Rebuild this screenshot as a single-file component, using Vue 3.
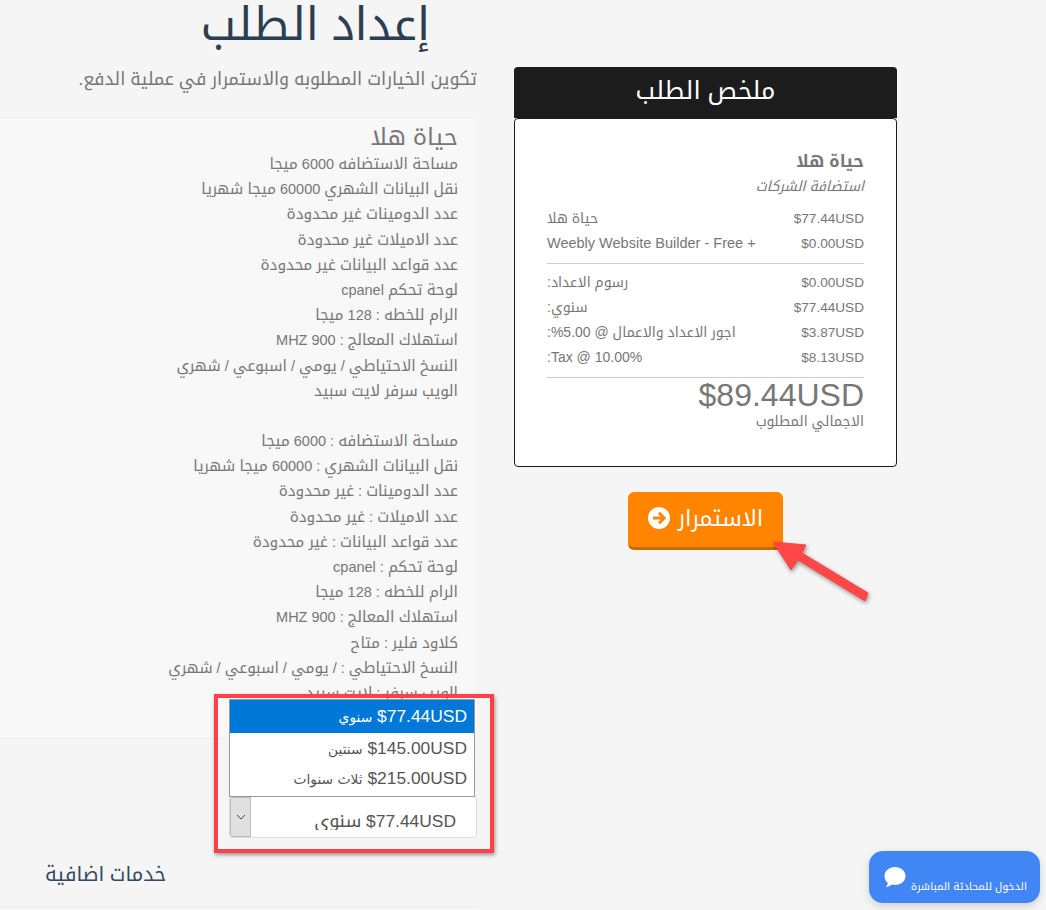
<script setup>
const lines1 = [
  'مساحة الاستضافه 6000 ميجا',
  'نقل البيانات الشهري 60000 ميجا شهريا',
  'عدد الدومينات غير محدودة',
  'عدد الاميلات غير محدودة',
  'عدد قواعد البيانات غير محدودة',
  'لوحة تحكم cpanel',
  'الرام للخطه : 128 ميجا',
  'استهلاك المعالج : MHZ 900',
  'النسخ الاحتياطي / يومي / اسبوعي / شهري',
  'الويب سرفر لايت سبيد',
]
const lines2 = [
  'مساحة الاستضافه : 6000 ميجا',
  'نقل البيانات الشهري : 60000 ميجا شهريا',
  'عدد الدومينات : غير محدودة',
  'عدد الاميلات : غير محدودة',
  'عدد قواعد البيانات : غير محدودة',
  'لوحة تحكم : cpanel',
  'الرام للخطه : 128 ميجا',
  'استهلاك المعالج : MHZ 900',
  'كلاود فلير : متاح',
  'النسخ الاحتياطي : / يومي / اسبوعي / شهري',
  'الويب سرفر : لايت سبيد',
]
const fees = [
  ['رسوم الاعداد:', '$0.00USD'],
  ['سنوي:', '$77.44USD'],
  ['اجور الاعداد والاعمال @ 5.00%:', '$3.87USD'],
  ['Tax @ 10.00%:', '$8.13USD'],
]
const seg = (s) =>
  s
    .split(/([\u0600-\u06FF]+(?:\s+[\u0600-\u06FF]+)*)/)
    .filter(Boolean)
    .map((t) => ({ t, a: /[\u0600-\u06FF]/.test(t) }))
</script>

<template>
  <div class="page">
    <aside class="summary">
      <h2 class="sum-head">ملخص الطلب</h2>
      <div class="sum-body">
        <div class="sum-name">حياة هلا</div>
        <div class="sum-group">استضافة الشركات</div>
        <div class="sum-row"><span class="price" dir="ltr">$77.44USD</span><span>حياة هلا</span></div>
        <div class="sum-row"><span class="price" dir="ltr">$0.00USD</span><span class="addon" dir="ltr">Weebly Website Builder - Free +</span></div>
        <hr class="sum-hr first" />
        <div v-for="f in fees" :key="f[1]" class="sum-row"><span class="price" dir="ltr">{{ f[1] }}</span><span>{{ f[0] }}</span></div>
        <hr class="sum-hr second" />
        <div class="sum-total" dir="ltr">$89.44USD</div>
        <div class="sum-label">الاجمالي المطلوب</div>
      </div>
      <div class="btn-wrap">
        <button class="go">
          <span>الاستمرار</span>
          <svg width="22" height="22" viewBox="0 0 22 22">
            <circle cx="11" cy="11" r="11" fill="#fff" />
            <path d="M5 11h11M11 5.800 16.200 11 11 16.200" fill="none" stroke="#ff8400" stroke-width="3" />
          </svg>
        </button>
      </div>
    </aside>

    <main class="main">
      <h1 class="title">إعداد الطلب</h1>
      <p class="lead">تكوين الخيارات المطلوبه والاستمرار في عملية الدفع.</p>
      <section class="panel">
        <h3 class="prod">حياة هلا</h3>
        <div v-for="l in lines1" :key="l" class="line"><span v-for="(s, i) in seg(l)" :key="i" :class="{ ar: s.a }">{{ s.t }}</span></div>
        <div class="line">&nbsp;</div>
        <div v-for="l in lines2" :key="'b' + l" class="line"><span v-for="(s, i) in seg(l)" :key="i" :class="{ ar: s.a }">{{ s.t }}</span></div>
      </section>
      <div class="cycle">
        <div class="select">
          <span class="sel-text"><bdi dir="ltr">$77.44USD</bdi> <span class="sel-ar">سنوي</span></span>
          <span class="sel-btn">
            <svg width="10" height="6" viewBox="0 0 10 6"><path d="M1 1l4 4 4-4" fill="none" stroke="#444" stroke-width="1" /></svg>
          </span>
        </div>
        <ul class="options">
          <li class="sel"><bdi dir="ltr">$77.44USD</bdi> <span class="o-ar">سنوي</span></li>
          <li><bdi dir="ltr">$145.00USD</bdi> <span class="o-ar">سنتين</span></li>
          <li><bdi dir="ltr">$215.00USD</bdi> <span class="o-ar">ثلاث سنوات</span></li>
        </ul>
      </div>
      <h3 class="extra">خدمات اضافية</h3>
    </main>

    <div class="mark"></div>
    <svg class="arrow" width="110" height="75" viewBox="0 0 110 75">
      <polygon points="2,2 35,5 31,13 97,53 94,61 27,20 20,30" fill="#ff4747" stroke="#ff4747" stroke-width="1" stroke-linejoin="round" />
    </svg>
    <div class="chat">
      <svg width="22" height="21" viewBox="0 0 22 21"><path d="M11 0c5.800 0 10.500 4 10.500 9s-4.700 9-10.500 9c-1 0-2-.1-3-.4-1.500 1.200-3.600 2.200-6 2.600.9-1.200 1.600-2.700 1.800-4.300C1.800 14.300.5 11.800.5 9 .5 4 5.200 0 11 0z" fill="#fff" /></svg>
      <span>الدخول للمحادثة المباشرة</span>
    </div>
  </div>
</template>

<style>
html, body { margin: 0; background: #f5f5f5; }
</style>

<style scoped>
.page {
  position: relative;
  direction: rtl;
  display: flex;
  justify-content: flex-start;
  gap: 37px;
  width: 1046px;
  height: 910px;
  overflow: hidden;
  box-sizing: border-box;
  padding-right: 149px;
  background: #f5f5f5;
  color: #777;
  font-family: "Liberation Sans", "Noto Kufi Arabic", "DejaVu Sans", sans-serif;
  font-size: 14px;
}
.summary { width: 383px; flex: none; padding-top: 67px; }
.sum-head {
  margin: 0;
  height: 51px;
  line-height: 47px;
  background: #1c1c1c;
  color: #fff;
  border-radius: 4px 4px 0 0;
  font-size: 25px;
  font-weight: 400;
  text-align: center;
}
.sum-body {
  height: 349px;
  box-sizing: border-box;
  padding: 30px 32px 0;
  background: #fff;
  border: 1px solid #1c1c1c;
  border-radius: 4px;
}
.sum-name { font-size: 17px; font-weight: 700; line-height: 25px; }
.sum-group { font-style: italic; line-height: 25px; margin-bottom: 7px; }
.sum-row { display: flex; justify-content: space-between; line-height: 25px; height: 25px; }
.price { font-size: 13.600px; }
.addon { font-size: 14.500px; }
.sum-hr { border: 0; border-top: 1px solid #ccc; margin: 7px 0 6px; }
.sum-hr.second { margin-bottom: 0; }
.sum-total { font-size: 32px; line-height: 34px; text-align: right; }
.sum-label { line-height: 18px; }
.btn-wrap { display: flex; justify-content: center; padding-top: 25px; }
.go {
  display: flex;
  align-items: center;
  justify-content: center;
  gap: 8px;
  width: 155px;
  height: 58px;
  padding: 0 0 3px;
  border: 0;
  border-bottom: 3px solid #c96a00;
  border-radius: 6px;
  background: #ff8400;
  color: #fff;
  font: inherit;
  font-size: 22.500px;
}
.main { width: 477px; flex: none; }
.title {
  margin: 0;
  padding-right: 47px;
  height: 54px;
  line-height: 50px;
  font-size: 45.400px;
  font-weight: 400;
  color: #2c3e50;
}
.lead { margin: 0; padding-top: 10px; height: 53px; line-height: 30px; font-size: 17.800px; }
.panel {
  height: 622px;
  box-sizing: border-box;
  padding: 5px 19px 0 0;
  background: #f8f8f8;
  border-top: 1px solid #eee;
  border-bottom: 1px solid #eee;
}
.prod { margin: 0; font-size: 24px; font-weight: 400; line-height: 28px; }
.line { line-height: 25.200px; height: 25.200px; white-space: nowrap; font-size: 14.500px; }
.ar { font-size: 15.300px; }
.cycle { position: relative; height: 99px; padding: 57px 0 0 229px; box-sizing: border-box; }
.select {
  display: flex;
  height: 42px;
  box-sizing: border-box;
  border: 1px solid #ddd;
  border-radius: 4px;
  background: #fff;
  overflow: hidden;
}
.sel-text { flex: 1; height: 27px; margin-top: 6px; overflow: hidden; padding-right: 20px; font-size: 17.400px; line-height: 36px; color: #555; white-space: nowrap; }
.sel-ar { font-size: 18px; }
.sel-btn { box-sizing: border-box; width: 21px; flex: none; display: flex; align-items: center; justify-content: center; background: #e0e0e0; border: 1px solid #bbb; }
.options {
  position: absolute;
  left: 229px;
  top: -40px;
  width: 246px;
  height: 98px;
  box-sizing: border-box;
  margin: 0;
  padding: 0;
  list-style: none;
  background: #fff;
  border: 1px solid #999;
  color: #555;
  font-size: 17.400px;
}
.options li { height: 30px; line-height: 30px; padding-right: 7px; }
.options li.sel { height: 33px; line-height: 33px; background: #0078d7; color: #fff; }
.o-ar { font-size: 13.800px; font-family: "DejaVu Sans", sans-serif; }
.extra { margin: 21px 0 0; padding: 0 0 17px 45px; text-align: left; font-size: 20px; font-weight: 400; color: #34495e; line-height: 30px; border-bottom: 1px solid #eee; }
.mark {
  position: absolute;
  left: 214px;
  top: 694px;
  width: 280px;
  height: 159px;
  box-sizing: border-box;
  border: 4px solid #ff4047;
  box-shadow: 1px 2px 4px rgba(0, 0, 0, .4);
}
.arrow { position: absolute; left: 771px; top: 540px; filter: drop-shadow(1px 2px 2px rgba(0, 0, 0, .4)); }
.chat {
  position: absolute;
  left: 869px;
  top: 851px;
  width: 171px;
  height: 52px;
  box-sizing: border-box;
  border-radius: 14px;
  background: #4285f4;
  color: #fff;
  font-size: 10.700px;
  box-shadow: 0 3px 8px rgba(0, 0, 0, .15);
}
.chat svg { position: absolute; left: 15px; top: 16px; }
.chat span { position: absolute; right: 13px; top: 26px; line-height: 18px; white-space: nowrap; }
</style>
